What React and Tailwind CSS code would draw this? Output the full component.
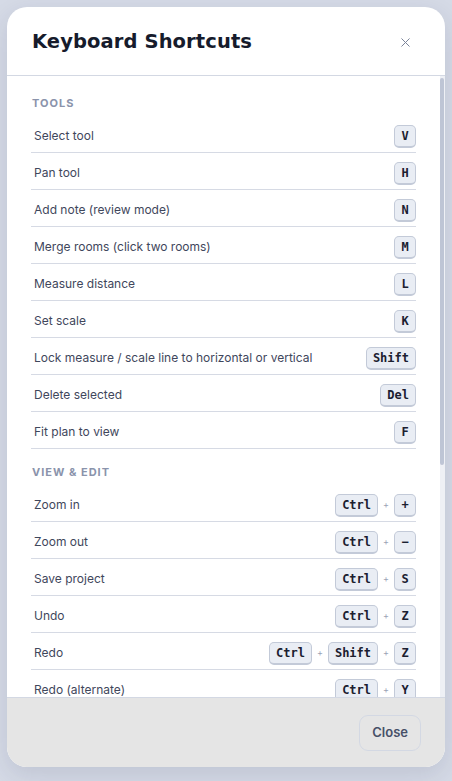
import { X } from "lucide-react";

const sections = [
  {
    title: "Tools",
    items: [
      { label: "Select tool", keys: ["V"] },
      { label: "Pan tool", keys: ["H"] },
      { label: "Add note (review mode)", keys: ["N"] },
      { label: "Merge rooms (click two rooms)", keys: ["M"] },
      { label: "Measure distance", keys: ["L"] },
      { label: "Set scale", keys: ["K"] },
      { label: "Lock measure / scale line to horizontal or vertical", keys: ["Shift"] },
      { label: "Delete selected", keys: ["Del"] },
      { label: "Fit plan to view", keys: ["F"] },
    ],
  },
  {
    title: "View & Edit",
    items: [
      { label: "Zoom in", keys: ["Ctrl", "+"] },
      { label: "Zoom out", keys: ["Ctrl", "−"] },
      { label: "Save project", keys: ["Ctrl", "S"] },
      { label: "Undo", keys: ["Ctrl", "Z"] },
      { label: "Redo", keys: ["Ctrl", "Shift", "Z"] },
      { label: "Redo (alternate)", keys: ["Ctrl", "Y"] },
    ],
  },
];

function Kbd({ children }) {
  return (
    <kbd className="inline-flex h-[23px] min-w-[22px] items-center justify-center rounded-[5px] border border-[#c3cad8] border-b-2 bg-[#e9edf4] px-[6px] font-['DejaVu_Sans_Mono',monospace] text-[12px] font-bold text-[#1b2030]">
      {children}
    </kbd>
  );
}

export default function App() {
  return (
    <div className="flex min-h-[781px] w-full justify-center bg-[#d5dae6] pt-[7px] font-['Inter',sans-serif]">
      <div className="flex h-[760px] w-[438px] flex-col overflow-hidden rounded-[20px] bg-white shadow-[0_8px_24px_rgba(30,40,70,0.12)]">
        <div className="flex h-[69px] shrink-0 items-center justify-between border-b border-[#d3d8e3] pl-[25px] pr-[32px] pt-[2px]">
          <h1 className="font-['DejaVu_Sans',sans-serif] text-[19.5px] font-bold tracking-[0.1px] text-[#161b2c]">
            Keyboard Shortcuts
          </h1>
          <X size={15} strokeWidth={1.6} className="text-[#7a8399]" />
        </div>

        <div className="flex min-h-0 flex-1">
          <div className="min-w-0 flex-1 overflow-hidden px-[24px]">
            {sections.map((s, si) => (
              <div key={s.title} className={si === 0 ? "pt-[21px]" : "pt-[17px]"}>
                <h2 className="mb-[6px] pl-px text-[11px] font-bold uppercase leading-[13px] tracking-[1px] text-[#8a93ab]">
                  {s.title}
                </h2>
                {s.items.map((it) => (
                  <div
                    key={it.label}
                    className="flex h-[37px] items-center justify-between border-b border-[#d6dae4] pl-[3px] pt-[4px]"
                  >
                    <span className="text-[12px] text-[#3f475c]">{it.label}</span>
                    <div className="flex items-center gap-[5px]">
                      {it.keys.map((k, i) => (
                        <span key={k + i} className="flex items-center gap-[5px]">
                          {i > 0 && <span className="text-[9px] text-[#9aa2b5]">+</span>}
                          <Kbd>{k}</Kbd>
                        </span>
                      ))}
                    </div>
                  </div>
                ))}
              </div>
            ))}
          </div>
          <div className="w-[5px] shrink-0 bg-[#eef0f5]">
            <div className="mt-[2px] h-[387px] w-[4px] rounded-full bg-[#bec5d5]" />
          </div>
        </div>

        <div className="flex h-[70px] shrink-0 items-center justify-end border-t border-[#d3d8e3] bg-[#e5e5e5] pr-[24px]">
          <button className="h-[36px] rounded-[9px] border border-[#d3d8e3] px-[12px] text-[13px] font-semibold text-[#475068]">
            Close
          </button>
        </div>
      </div>
    </div>
  );
}
